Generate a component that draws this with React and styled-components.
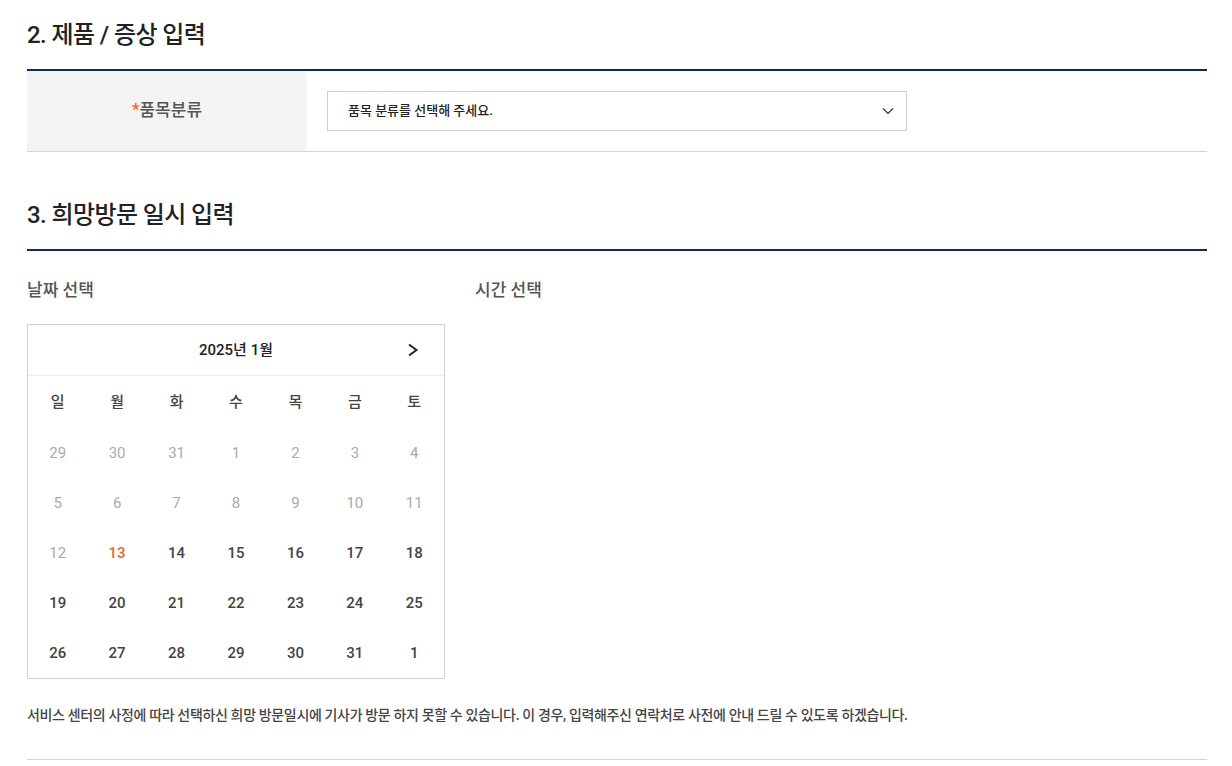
import styled, { createGlobalStyle } from "styled-components";

const GlobalStyle = createGlobalStyle`
  * {
    box-sizing: border-box;
    margin: 0;
    padding: 0;
  }

  body {
    background: #fff;
    font-family: Roboto, "Noto Sans CJK KR", sans-serif;
    color: #222;
  }
`;

const Page = styled.div`
  width: 1180px;
  margin-left: 27px;
  padding-top: 18px;
`;

const Title = styled.h2`
  font-size: 24px;
  line-height: 34px;
  font-weight: 500;
  color: #222;
  letter-spacing: -0.6px;
  padding-bottom: 17px;
  border-bottom: 2px solid #0f2a5f;
`;

const FormRow = styled.div`
  display: flex;
  height: 81px;
  border-bottom: 1px solid #d4d4d4;
`;

const Label = styled.div`
  width: 280px;
  background: #f4f4f4;
  display: flex;
  align-items: center;
  justify-content: center;
  padding-bottom: 5px;
  font-size: 17px;
  font-weight: 500;
  color: #555;

  .req {
    color: #f26522;
  }
`;

const Field = styled.div`
  flex: 1;
  display: flex;
  align-items: center;
  padding-left: 20px;
`;

const SelectBox = styled.div`
  width: 580px;
  height: 40px;
  border: 1px solid #cfcfcf;
  display: flex;
  align-items: center;
  justify-content: space-between;
  padding: 0 12px 0 20px;
  font-size: 13px;
  font-weight: 500;
  color: #222;

  span {
    padding-bottom: 3px;
  }
`;

const Section = styled.section`
  margin-top: 46px;
`;

const Columns = styled.div`
  display: flex;
  gap: 30px;
  padding-top: 26px;
`;

const Column = styled.div`
  width: ${(p) => p.$width || "auto"};
`;

const SubTitle = styled.h3`
  font-size: 17px;
  line-height: 26px;
  font-weight: 500;
  color: #555;
  margin-bottom: 21px;
`;

const Calendar = styled.div`
  width: 418px;
  border: 1px solid #cfcfcf;
`;

const CalHead = styled.div`
  position: relative;
  height: 51px;
  display: flex;
  align-items: center;
  justify-content: center;
  padding-bottom: 4px;
  border-bottom: 1px solid #ededed;
  font-size: 15px;
  font-weight: 500;
  color: #222;
`;

const NextBtn = styled.button`
  position: absolute;
  right: 24px;
  top: 17px;
  width: 14px;
  height: 16px;
  border: 0;
  background: none;
  display: flex;
  align-items: center;
  justify-content: center;
`;

const Grid = styled.div`
  display: grid;
  grid-template-columns: repeat(7, 1fr);
  grid-auto-rows: 50px;
  padding-top: 2px;
`;

const Cell = styled.div`
  display: flex;
  align-items: center;
  justify-content: center;
  padding-bottom: ${(p) => (p.$head ? "6px" : "0")};
  font-size: 15px;
  font-weight: ${(p) => (p.$muted ? 400 : 500)};
  color: ${(p) => (p.$today ? "#f26522" : p.$muted ? "#aaa" : "#444")};
`;

const Note = styled.p`
  margin-top: 26px;
  font-size: 14px;
  line-height: 20px;
  font-weight: 500;
  color: #444;
  letter-spacing: -0.35px;
  padding-bottom: 34px;
  border-bottom: 1px solid #d4d4d4;
`;

const weekdays = ["일", "월", "화", "수", "목", "금", "토"];

const days = [
  ...[29, 30, 31].map((d) => ({ d, muted: true })),
  ...Array.from({ length: 31 }, (_, i) => ({ d: i + 1, muted: i + 1 < 13, today: i + 1 === 13 })),
  { d: 1 },
];

const App = () => (
  <>
    <GlobalStyle />
    <Page>
      <Title>2. 제품 / 증상 입력</Title>
      <FormRow>
        <Label>
          <span className="req">*</span>품목분류
        </Label>
        <Field>
          <SelectBox>
            <span>품목 분류를 선택해 주세요.</span>
            <svg width="12" height="8" viewBox="0 0 12 8">
              <path d="M1 1.5 6 6.5 11 1.5" fill="none" stroke="#333" strokeWidth="1.2" />
            </svg>
          </SelectBox>
        </Field>
      </FormRow>

      <Section>
        <Title>3. 희망방문 일시 입력</Title>
        <Columns>
          <Column $width="418px">
            <SubTitle>날짜 선택</SubTitle>
            <Calendar>
              <CalHead>
                2025년 1월
                <NextBtn aria-label="다음 달">
                  <svg width="12" height="14" viewBox="0 0 12 14">
                    <path d="M2 1.5 9.5 7 2 12.5" fill="none" stroke="#222" strokeWidth="2" />
                  </svg>
                </NextBtn>
              </CalHead>
              <Grid>
                {weekdays.map((w) => (
                  <Cell key={w} $head>
                    {w}
                  </Cell>
                ))}
                {days.map((x, i) => (
                  <Cell key={i} $muted={x.muted} $today={x.today}>
                    {x.d}
                  </Cell>
                ))}
              </Grid>
            </Calendar>
          </Column>
          <Column>
            <SubTitle>시간 선택</SubTitle>
          </Column>
        </Columns>
        <Note>
          서비스 센터의 사정에 따라 선택하신 희망 방문일시에 기사가 방문 하지 못할 수 있습니다. 이 경우, 입력해주신 연락처로 사전에 안내 드릴 수 있도록 하겠습니다.
        </Note>
      </Section>
    </Page>
  </>
);

export default App;
